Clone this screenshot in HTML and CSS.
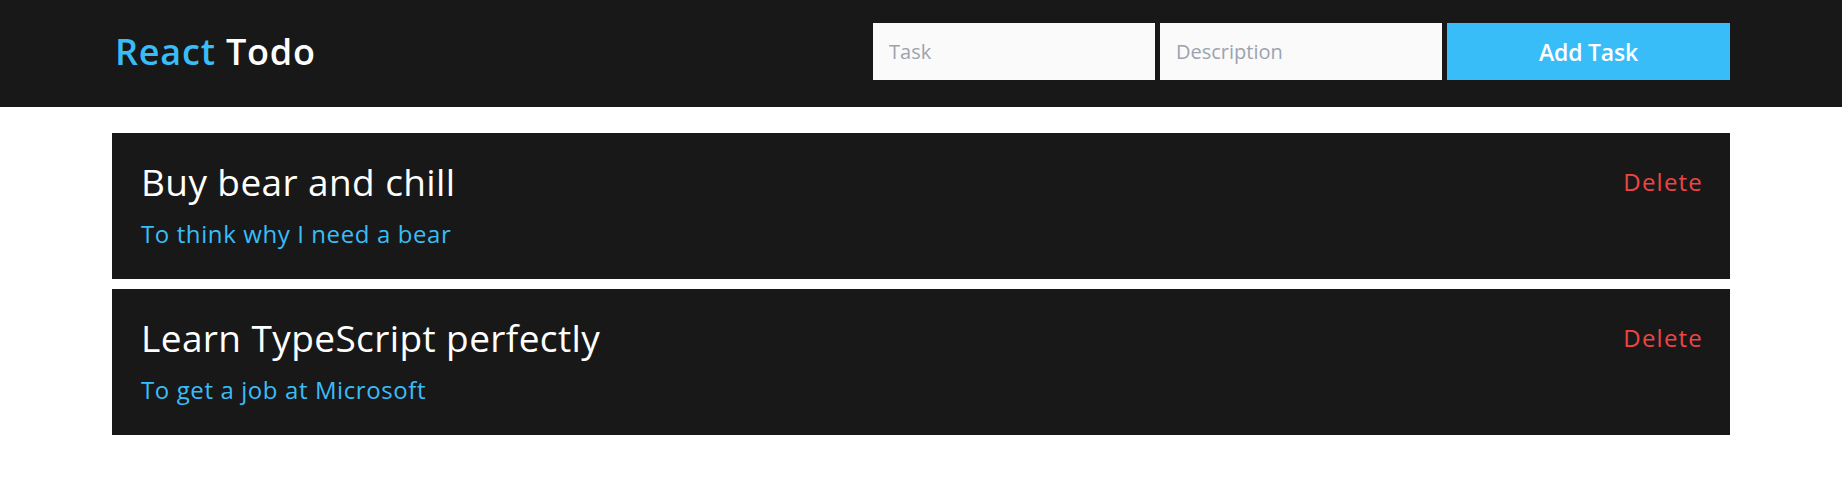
FILE: index.html
```html
<!DOCTYPE html>
<html lang="en">
<head>
<meta charset="utf-8">
<title>React Todo</title>
<link rel="stylesheet" href="styles.css">
</head>
<body>
<header class="topbar">
  <div class="container topbar-inner">
    <h1 class="logo"><span class="logo-accent">React</span> Todo</h1>
    <form class="add-form">
      <input class="field" type="text" placeholder="Task">
      <input class="field" type="text" placeholder="Description">
      <button class="add-btn" type="button">Add Task</button>
    </form>
  </div>
</header>
<main class="container list">
  <article class="todo">
    <div class="todo-head">
      <h2 class="todo-title">Buy bear and chill</h2>
      <button class="delete-btn" type="button">Delete</button>
    </div>
    <p class="todo-desc">To think why I need a bear</p>
  </article>
  <article class="todo">
    <div class="todo-head">
      <h2 class="todo-title">Learn TypeScript perfectly</h2>
      <button class="delete-btn" type="button">Delete</button>
    </div>
    <p class="todo-desc">To get a job at Microsoft</p>
  </article>
</main>
</body>
</html>
```
FILE: styles.css
```css
* { box-sizing: border-box; }
html, body { margin: 0; padding: 0; }
body {
  background: #ffffff;
  font-family: "Open Sans", "Noto Sans", sans-serif;
  color: #ffffff;
}
.container {
  width: 1618px;
  margin: 0 auto;
}
.topbar {
  background: #181818;
  padding: 23px 0 27px;
}
.topbar-inner {
  display: flex;
  align-items: center;
  justify-content: space-between;
  height: 57px;
}
.logo {
  margin: 0;
  font-size: 36px;
  font-weight: 600;
  letter-spacing: 0.8px;
  line-height: 40px;
  color: #ffffff;
  padding-left: 3px;
}
.logo-accent { color: #38bdf8; }
.add-form {
  display: flex;
  gap: 5px;
}
.field {
  width: 282px;
  height: 57px;
  border: none;
  outline: none;
  background: #fafafa;
  padding: 0 16px;
  font-family: inherit;
  font-size: 20px;
  color: #374151;
}
.field::placeholder { color: #9ca3af; }
.add-btn {
  width: 283px;
  height: 57px;
  border: none;
  background: #38bdf8;
  color: #ffffff;
  font-family: inherit;
  font-size: 23px;
  font-weight: 600;
  letter-spacing: -0.2px;
  cursor: pointer;
}
.list {
  padding-top: 26px;
  display: flex;
  flex-direction: column;
  gap: 10px;
}
.todo {
  background: #181818;
  padding: 29px 27px 29px 29px;
}
.todo-head {
  display: flex;
  align-items: center;
  justify-content: space-between;
}
.todo-title {
  margin: 0;
  font-size: 37px;
  font-weight: 400;
  letter-spacing: 0.4px;
  line-height: 40px;
  color: #ffffff;
}
.delete-btn {
  border: none;
  background: none;
  padding: 0;
  color: #ef4444;
  font-family: inherit;
  font-size: 24px;
  letter-spacing: 1.2px;
  line-height: 32px;
  cursor: pointer;
}
.todo-desc {
  margin: 16px 0 0;
  font-size: 24px;
  letter-spacing: 0.6px;
  line-height: 32px;
  color: #38bdf8;
}
```
